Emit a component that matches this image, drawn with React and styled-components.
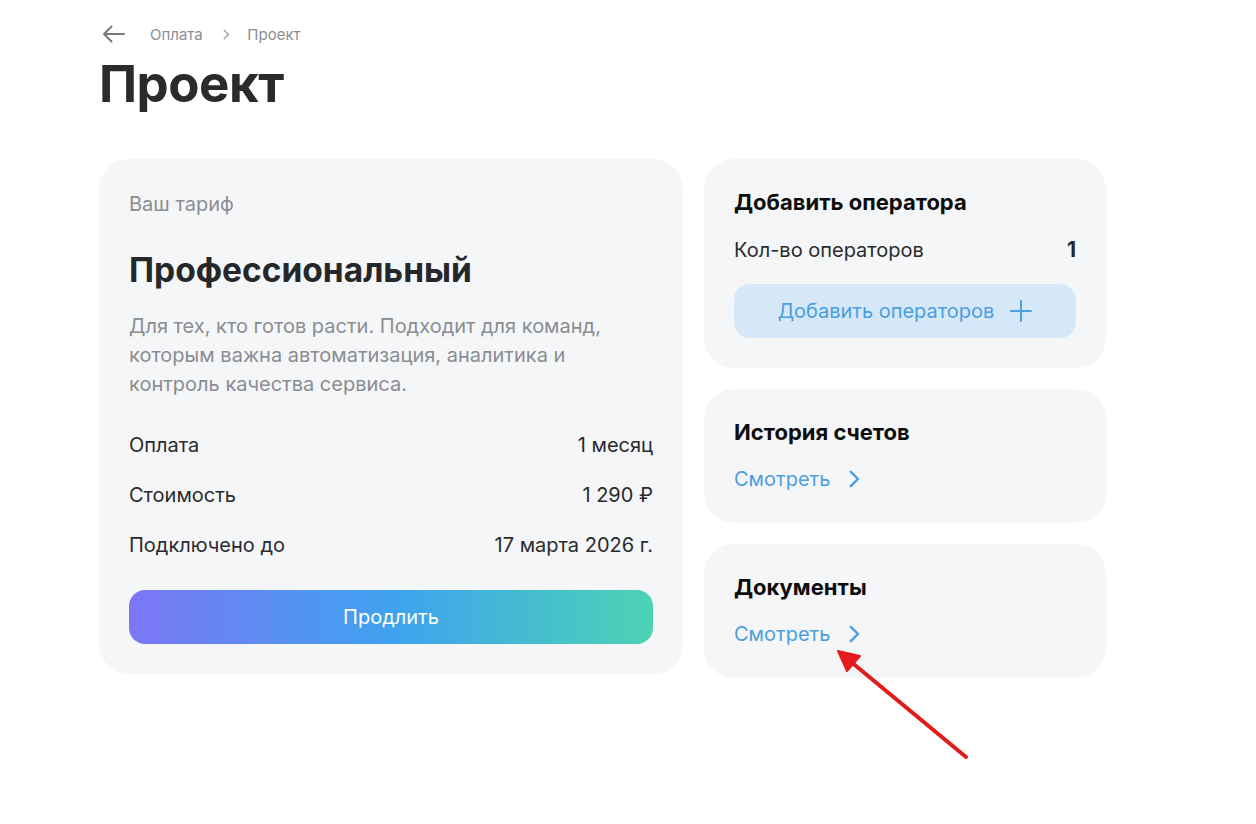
import styled, { createGlobalStyle } from 'styled-components';

const GlobalStyle = createGlobalStyle`
  body {
    margin: 0;
    background: #ffffff;
    font-family: 'Inter', 'Noto Sans', sans-serif;
  }
`;

const Page = styled.div`
  position: relative;
  width: 1256px;
  height: 824px;
  padding: 22px 0 0 99px;
  box-sizing: border-box;
`;

const Crumbs = styled.nav`
  display: flex;
  align-items: center;
  height: 24px;
  font-size: 15px;
  color: #8a8d92;
`;

const BackButton = styled.button`
  display: flex;
  align-items: center;
  padding: 0;
  margin: 0 25px 0 3px;
  border: none;
  background: none;
  color: #77797d;
  cursor: pointer;
`;

const CrumbSep = styled.span`
  display: flex;
  margin: 0 18px 0 20px;
  color: #8a8d92;
`;

const PageTitle = styled.h1`
  margin: 8px 0 0;
  font-size: 51px;
  line-height: 60px;
  font-weight: 700;
  letter-spacing: -0.5px;
  color: #2a2b2d;
`;

const Columns = styled.div`
  display: flex;
  align-items: flex-start;
  gap: 21px;
  margin-top: 45px;
`;

const Card = styled.section`
  box-sizing: border-box;
  width: ${p => p.$width}px;
  background: #f5f6f8;
  border-radius: 30px;
  padding: ${p => p.$padding};
`;

const SideStack = styled.div`
  display: flex;
  flex-direction: column;
  gap: 21px;
`;

const Label = styled.div`
  font-size: 20px;
  line-height: 26px;
  color: #8a8d92;
`;

const PlanName = styled.h2`
  margin: 33px 0 0;
  font-size: 33.5px;
  line-height: 40px;
  font-weight: 700;
  color: #26272a;
`;

const Description = styled.p`
  margin: 22px 0 0;
  font-size: 20px;
  line-height: 29px;
  color: #8a8d92;
`;

const InfoList = styled.div`
  display: flex;
  flex-direction: column;
  gap: 24px;
  margin-top: ${p => p.$top}px;
`;

const InfoRow = styled.div`
  display: flex;
  justify-content: space-between;
  align-items: center;
  font-size: 20px;
  line-height: 26px;
  color: #2a2b2d;
`;

const Count = styled.span`
  font-weight: 700;
  font-size: 21px;
  color: #26272a;
`;

const GradientButton = styled.button`
  display: block;
  width: 100%;
  height: 54px;
  margin-top: 32px;
  border: none;
  border-radius: 16px;
  background: linear-gradient(90deg, #7c76f5 0%, #3ea2f0 50%, #4cd3b4 100%);
  color: #ffffff;
  font-family: inherit;
  font-size: 20px;
  cursor: pointer;
`;

const SoftButton = styled.button`
  display: flex;
  align-items: center;
  justify-content: center;
  gap: 16px;
  width: 100%;
  height: 54px;
  margin-top: 21px;
  border: none;
  border-radius: 16px;
  background: #d6e8f7;
  color: #4a9fe0;
  font-family: inherit;
  font-size: 20px;
  cursor: pointer;
`;

const CardTitle = styled.h3`
  margin: 0;
  font-size: 22px;
  line-height: 28px;
  font-weight: 700;
  color: #0d0d0f;
`;

const LinkRow = styled.a`
  display: flex;
  align-items: center;
  gap: 19px;
  margin-top: ${p => p.$top}px;
  font-size: 20px;
  line-height: 26px;
  color: #4a9ee0;
  text-decoration: none;
  cursor: pointer;
`;

const Annotation = styled.svg`
  position: absolute;
  left: 830px;
  top: 640px;
  pointer-events: none;
`;

const Chevron = ({ size = 14, color = 'currentColor', width = 2 }) => (
  <svg width={size * 0.6} height={size} viewBox="0 0 9 15" fill="none">
    <path d="M1.5 1.5L7.5 7.5L1.5 13.5" stroke={color} strokeWidth={width} strokeLinecap="round" strokeLinejoin="round" />
  </svg>
);

function ViewLink() {
  return (
    <LinkRow $top={20}>
      Смотреть
      <Chevron size={18} />
    </LinkRow>
  );
}

export default function App() {
  return (
    <>
      <GlobalStyle />
      <Page>
        <Crumbs>
          <BackButton aria-label="Назад">
            <svg width="23" height="18" viewBox="0 0 23 18" fill="none">
              <path d="M22 9H2M9.5 1.5L2 9L9.5 16.5" stroke="currentColor" strokeWidth="2" strokeLinecap="round" strokeLinejoin="round" />
            </svg>
          </BackButton>
          <span>Оплата</span>
          <CrumbSep><Chevron size={11} width={1.5} /></CrumbSep>
          <span>Проект</span>
        </Crumbs>
        <PageTitle>Проект</PageTitle>

        <Columns>
          <Card $width={584} $padding="32px 30px 30px">
            <Label>Ваш тариф</Label>
            <PlanName>Профессиональный</PlanName>
            <Description>
              Для тех, кто готов расти. Подходит для команд,<br />
              которым важна автоматизация, аналитика и<br />
              контроль качества сервиса.
            </Description>
            <InfoList $top={33}>
              <InfoRow><span>Оплата</span><span>1 месяц</span></InfoRow>
              <InfoRow><span>Стоимость</span><span>1 290 ₽</span></InfoRow>
              <InfoRow><span>Подключено до</span><span>17 марта 2026 г.</span></InfoRow>
            </InfoList>
            <GradientButton>Продлить</GradientButton>
          </Card>

          <SideStack>
            <Card $width={402} $padding="29px 30px 30px">
              <CardTitle>Добавить оператора</CardTitle>
              <InfoList $top={21}>
                <InfoRow><span>Кол-во операторов</span><Count>1</Count></InfoRow>
              </InfoList>
              <SoftButton>
                Добавить операторов
                <svg width="22" height="22" viewBox="0 0 22 22" fill="none">
                  <path d="M11 1V21M1 11H21" stroke="currentColor" strokeWidth="2" strokeLinecap="round" />
                </svg>
              </SoftButton>
            </Card>
            <Card $width={402} $padding="29px 30px 31px">
              <CardTitle>История счетов</CardTitle>
              <ViewLink />
            </Card>
            <Card $width={402} $padding="29px 30px 31px">
              <CardTitle>Документы</CardTitle>
              <ViewLink />
            </Card>
          </SideStack>
        </Columns>

        <Annotation width="145" height="125" viewBox="0 0 145 125">
          <path d="M136 117L20 21" stroke="#e31b1b" strokeWidth="4" strokeLinecap="round" />
          <path d="M8 11L30 16L17 31Z" fill="#e31b1b" stroke="#e31b1b" strokeWidth="2" strokeLinejoin="round" />
        </Annotation>
      </Page>
    </>
  );
}
